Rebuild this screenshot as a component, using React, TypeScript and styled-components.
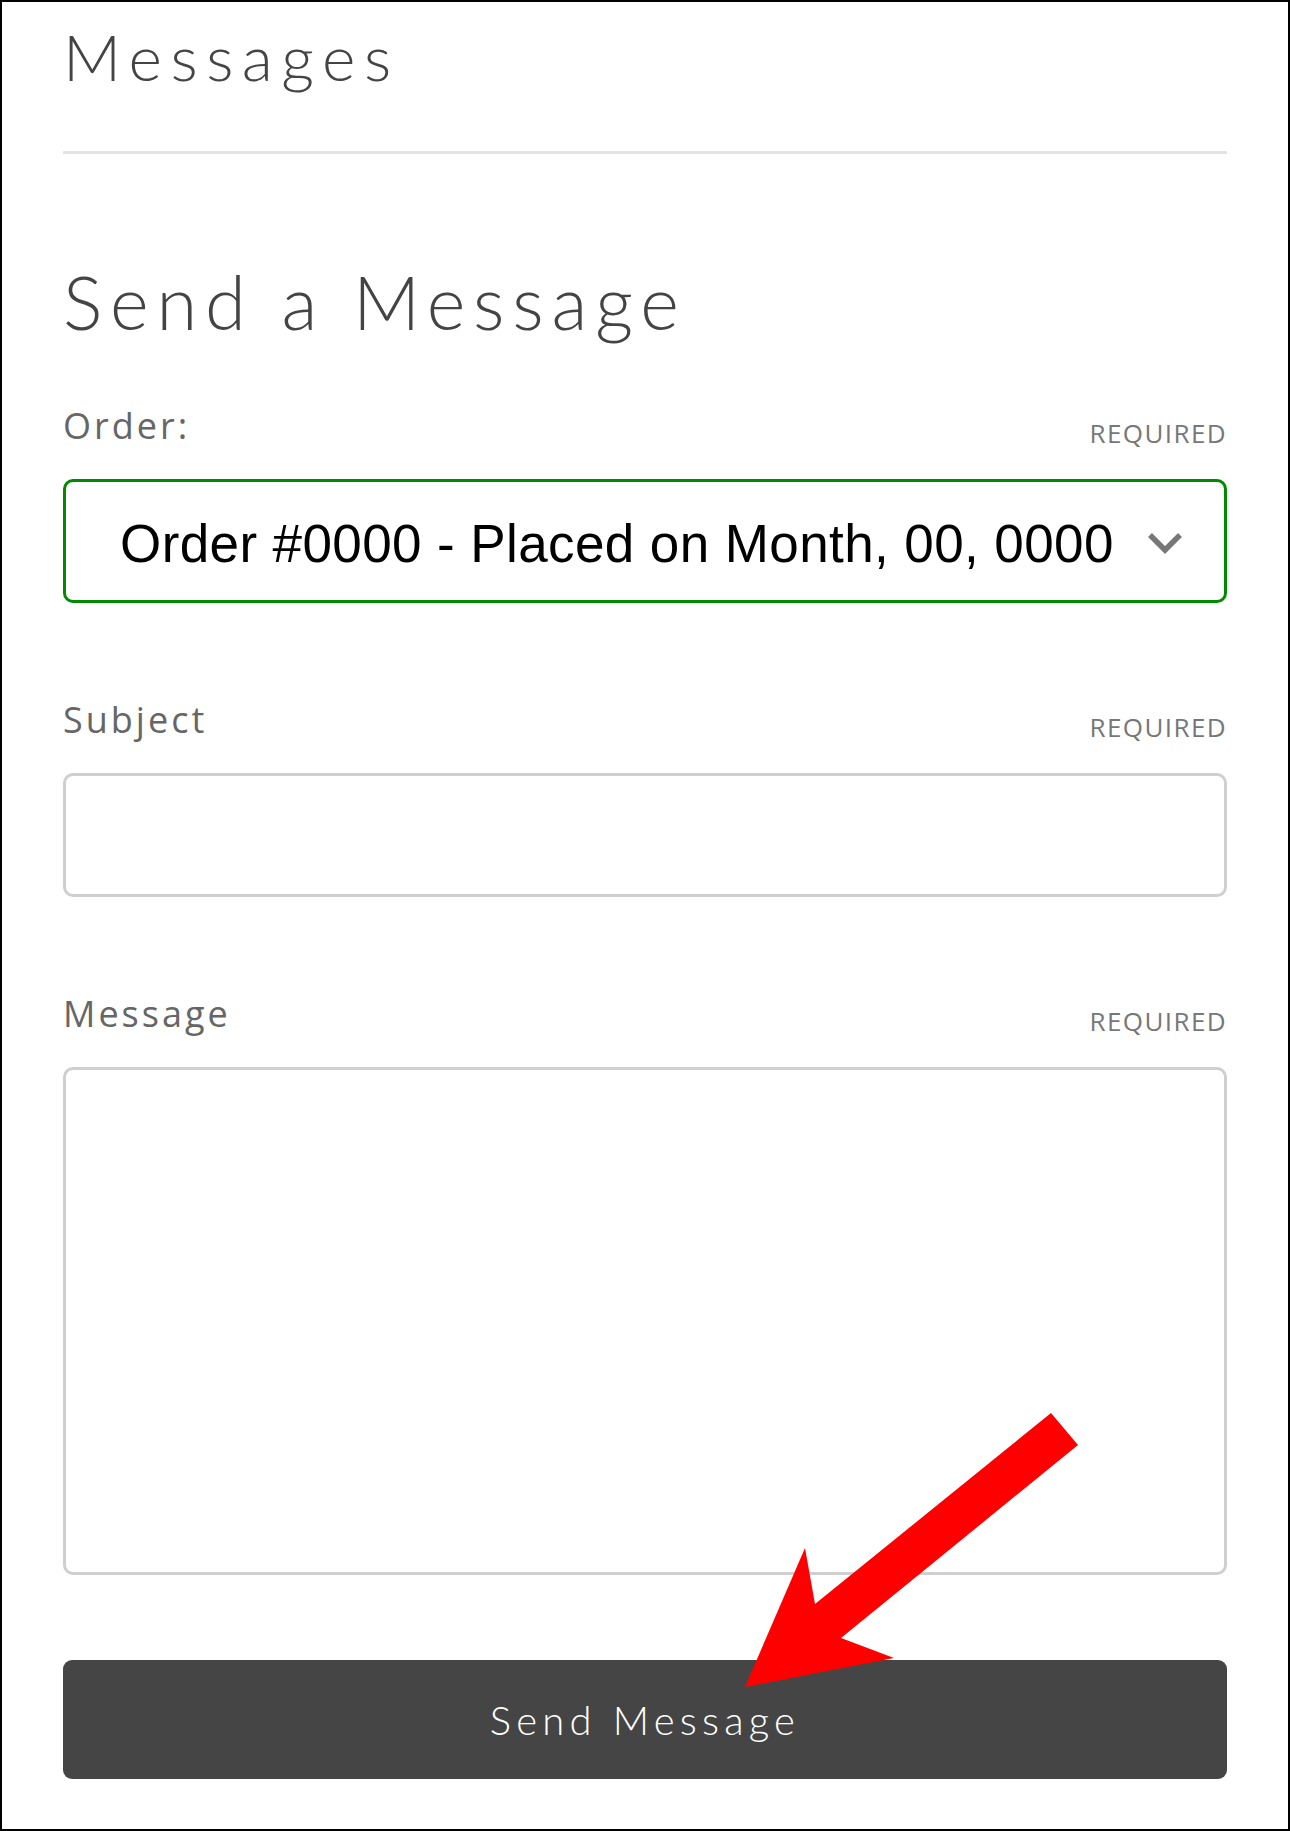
import styled, { createGlobalStyle } from 'styled-components';

const GlobalStyle = createGlobalStyle`
  html, body {
    margin: 0;
    padding: 0;
    background: #fff;
  }
  * {
    box-sizing: border-box;
  }
`;

const fields = [
    { id: 'subject', label: 'Subject', kind: 'input' as const },
    { id: 'message', label: 'Message', kind: 'textarea' as const },
];

export default function App() {
    return (
        <>
            <GlobalStyle />
            <Page>
                <PageTitle>Messages</PageTitle>
                <Divider />
                <SectionTitle>Send a Message</SectionTitle>
                <Form onSubmit={e => e.preventDefault()}>
                    <Field first>
                        <LabelRow>
                            <Label>Order:</Label>
                            <Required>REQUIRED</Required>
                        </LabelRow>
                        <SelectBox>
                            <SelectValue>Order #0000 - Placed on Month, 00, 0000</SelectValue>
                            <Chevron viewBox="0 0 36 22" aria-hidden>
                                <polyline points="3,3 18,18 33,3" />
                            </Chevron>
                        </SelectBox>
                    </Field>
                    {fields.map(field => (
                        <Field key={field.id}>
                            <LabelRow>
                                <Label htmlFor={field.id}>{field.label}</Label>
                                <Required>REQUIRED</Required>
                            </LabelRow>
                            {field.kind === 'input'
                                ? <TextInput id={field.id} type="text" />
                                : <TextArea id={field.id} />}
                        </Field>
                    ))}
                    <SubmitButton type="submit">Send Message</SubmitButton>
                </Form>
                <Callout viewBox="0 0 340 280" aria-hidden>
                    <polygon points="3,277 63,138 73,194 309,3 336,35 99,228 152,248" />
                </Callout>
            </Page>
        </>
    );
}

const Page = styled.div`
  position: relative;
  width: 1290px;
  height: 1831px;
  border: 2px solid #000;
  padding: 16px 61px 0;
  background: #fff;
  overflow: hidden;
`;

const PageTitle = styled.h1`
  margin: 0;
  font-family: 'Lato', 'Liberation Sans', sans-serif;
  font-weight: 300;
  font-size: 64px;
  line-height: 77px;
  letter-spacing: 8.5px;
  color: #444;
`;

const Divider = styled.hr`
  margin: 56px 0 0;
  border: none;
  height: 3px;
  background: #e3e3e3;
`;

const SectionTitle = styled.h2`
  margin: 103px 0 0;
  font-family: 'Lato', 'Liberation Sans', sans-serif;
  font-weight: 300;
  font-size: 74px;
  line-height: 89px;
  letter-spacing: 7.8px;
  color: #444;
`;

const Form = styled.form`
  display: flex;
  flex-direction: column;
`;

const Field = styled.div<{ first?: boolean }>`
  display: flex;
  flex-direction: column;
  margin-top: ${({ first }) => (first ? '60px' : '97px')};
`;

const LabelRow = styled.div`
  display: flex;
  justify-content: space-between;
  align-items: flex-start;
  height: 40px;
  margin-bottom: 33px;
`;

const Label = styled.label`
  font-family: 'Open Sans', 'Liberation Sans', sans-serif;
  font-size: 36px;
  line-height: 40px;
  letter-spacing: 3px;
  color: #666;
`;

const Required = styled.span`
  margin-top: 12px;
  font-family: 'Open Sans', 'Liberation Sans', sans-serif;
  font-size: 26px;
  line-height: 30px;
  letter-spacing: 1.4px;
  color: #777;
`;

const SelectBox = styled.div`
  display: flex;
  align-items: center;
  justify-content: space-between;
  height: 124px;
  padding: 4px 41px 0 54px;
  border: 3px solid #008a00;
  border-radius: 10px;
  background: #fff;
`;

const SelectValue = styled.span`
  font-family: 'Liberation Sans', Arial, sans-serif;
  font-size: 53px;
  letter-spacing: 0.4px;
  color: #000;
  white-space: nowrap;
`;

const Chevron = styled.svg`
  width: 36px;
  height: 22px;
  fill: none;
  stroke: #777;
  stroke-width: 5.5;
`;

const TextInput = styled.input`
  height: 124px;
  border: 3px solid #cfcfcf;
  border-radius: 10px;
  padding: 0 24px;
  font-family: 'Liberation Sans', Arial, sans-serif;
  font-size: 40px;
  outline: none;
`;

const TextArea = styled.textarea`
  height: 508px;
  border: 3px solid #cfcfcf;
  border-radius: 10px;
  padding: 24px;
  font-family: 'Liberation Sans', Arial, sans-serif;
  font-size: 40px;
  resize: none;
  outline: none;
`;

const SubmitButton = styled.button`
  margin-top: 85px;
  height: 119px;
  border: none;
  border-radius: 9px;
  background: #454545;
  color: #fff;
  font-family: 'Lato', 'Liberation Sans', sans-serif;
  font-weight: 300;
  font-size: 40px;
  letter-spacing: 5.2px;
  cursor: pointer;
`;

const Callout = styled.svg`
  position: absolute;
  left: 740px;
  top: 1408px;
  width: 340px;
  height: 280px;
  fill: #ff0000;
`;
